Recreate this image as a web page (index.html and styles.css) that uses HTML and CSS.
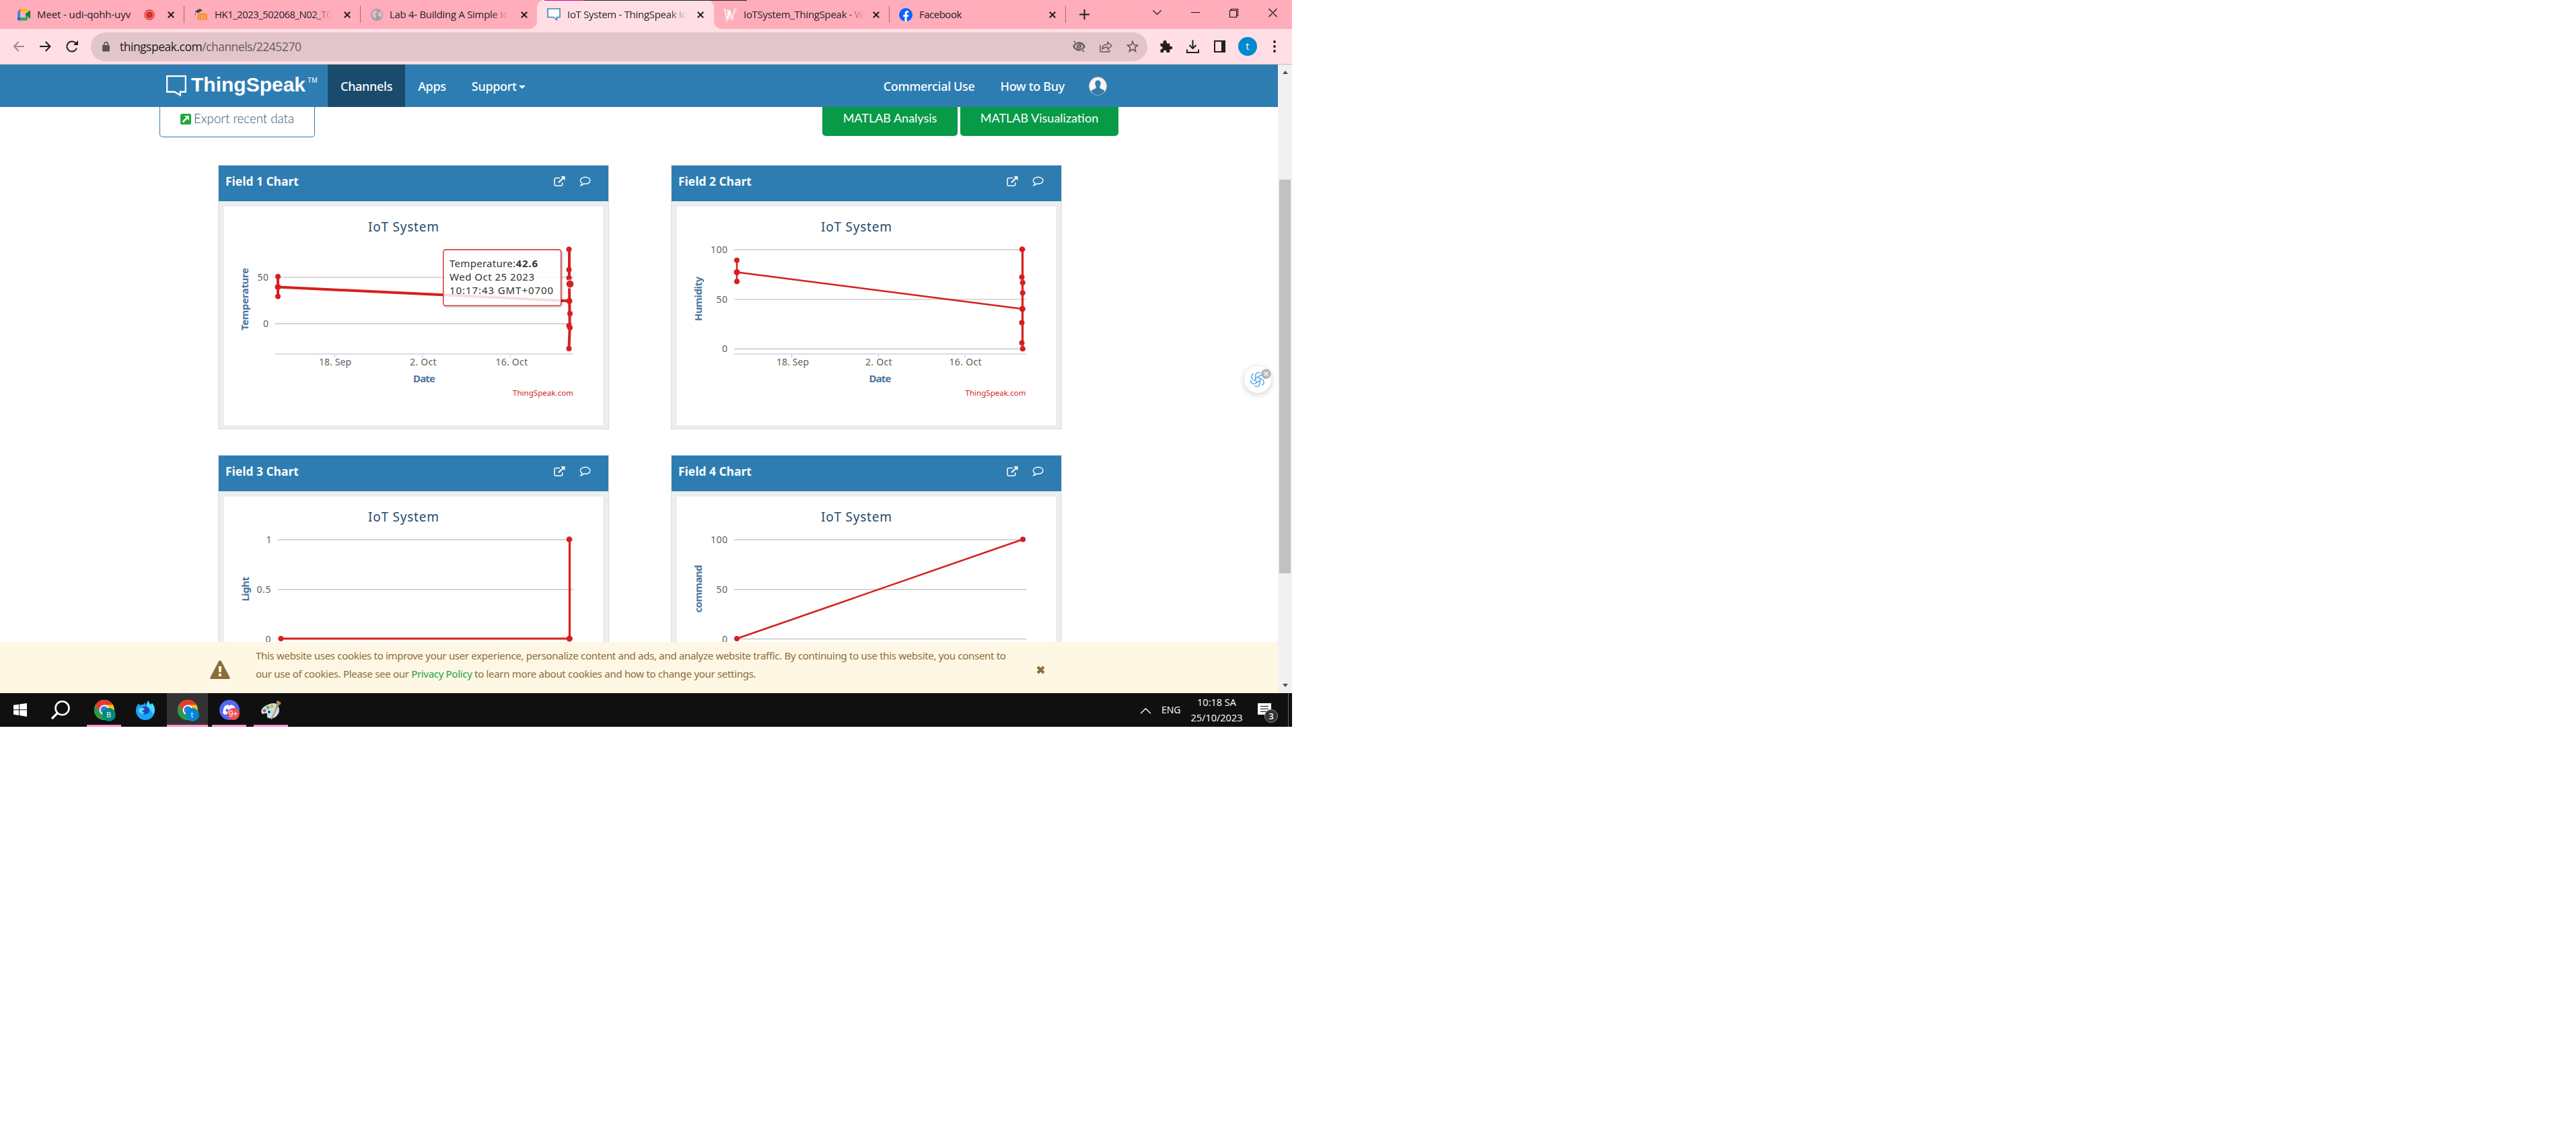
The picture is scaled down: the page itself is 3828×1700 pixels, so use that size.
FILE: index.html
```html
<!DOCTYPE html>
<html lang="en">
<head>
<meta charset="utf-8">
<title>IoT System - ThingSpeak IoT</title>
<link rel="stylesheet" href="styles.css">
</head>
<body>
<svg width="0" height="0" class="defs">
  <defs>
    <symbol id="x" viewBox="0 0 10 10"><path d="M.8.8l8.4 8.4M9.200.8L.8 9.200" fill="none" stroke="#1f1f1f" stroke-width="2"/></symbol>
    <symbol id="ext" viewBox="0 0 17 15"><path d="M9 2.500H3.200Q1 2.500 1 4.700v7Q1 14 3.200 14h7.300q2.200 0 2.200-2.300V9" fill="none" stroke="#fff" stroke-width="1.500"/><path d="M7 9.300L13.500 3" stroke="#fff" stroke-width="2.200"/><path d="M10.200 0h6.300v6.200z" fill="#fff"/></symbol>
    <symbol id="comment" viewBox="0 0 17 15"><path d="M8.700 1.300c4.200 0 7.200 2.200 7.200 5s-3 5-7.200 5c-.8 0-1.600-.1-2.300-.3Q4.800 13 2.200 13.500 3.700 12 3.800 10C2.300 9.200 1.400 7.900 1.400 6.300c0-2.800 3.100-5 7.300-5z" fill="none" stroke="#fff" stroke-width="1.400"/></symbol>
    <symbol id="chrome" viewBox="0 0 30 30"><circle cx="15" cy="15" r="15" fill="#fbc116"/><path d="M2 7.500A15 15 0 0 1 28 7.500H15L8.500 19z" fill="#e33b2e"/><path d="M2 7.500A15 15 0 0 0 15 30l6.500-11.200L15 15 8.500 18.700z" fill="#2b9a47"/><circle cx="15" cy="15" r="7.500" fill="#fff"/><circle cx="15" cy="15" r="5.700" fill="#2f7de9"/></symbol>
  </defs>
</svg>
<div class="desktop">
  <div class="tabstrip">
    <div class="tab t1">
      <svg class="fav" width="19" height="19" viewBox="0 0 19 19"><path d="M4 1h9q2 0 2 2v3.500l-3 2.500V5H5z" fill="#fbbc04"/><path d="M0 5.500L4.500 1v4.500z" fill="#ea4335"/><path d="M0 5.500h4.500V14H0z" fill="#4285f4"/><path d="M0 14h4.500v4.500H2q-2 0-2-2z" fill="#1967d2"/><path d="M4.500 14H12v-3.500l3 2.500v3.500q0 2-2 2H4.500z" fill="#34a853"/><path d="M11 9.500L19 3v13z" fill="#188038"/><path d="M4.500 5.500H11V14H4.500z" fill="#ffb0bd"/></svg>
      <span class="tt">Meet - udi-qohh-uyv</span>
      <svg class="rec" width="16" height="16" viewBox="0 0 16 16"><circle cx="8" cy="8" r="7" fill="none" stroke="#d93025" stroke-width="1.300"/><circle cx="8" cy="8" r="5.300" fill="#d93025"/></svg>
      <svg class="x" width="10" height="10"><use href="#x"/></svg>
    </div>
    <div class="tab t2">
      <svg class="fav" width="20" height="18" viewBox="0 0 20 18"><path d="M6.500 17V9.500q0-1.500 1.500-1.500t1.700 1.500V17M9.700 17V9.500Q9.800 8 12 8t2.200 1.500V17M14.200 17V9.500q.1-1.500 2-1.500t2 1.500V17" transform="translate(-.5 0)" fill="none" stroke="#f7931e" stroke-width="2.600"/><path d="M1 3.500L8 0l4 2.500L5 6.500z" fill="#444"/><path d="M1.500 4v6" stroke="#777" fill="none"/></svg>
      <span class="tt fade">HK1_2023_502068_N02_T0</span>
      <svg class="x" width="10" height="10"><use href="#x"/></svg>
    </div>
    <div class="tab t3">
      <svg class="fav" width="18" height="18" viewBox="0 0 18 18"><circle cx="9" cy="9" r="9" fill="#9aa0a6"/><path d="M2 6q3-4 6-4l2 2-2 1 1 2-3 1 2 2-1 5Q3 13 2 10zM11 6l4-2q2 3 2 6l-3 4-1-3-3-1z" fill="#e6bcc4"/></svg>
      <span class="tt fade">Lab 4- Building A Simple Io</span>
      <svg class="x" width="10" height="10"><use href="#x"/></svg>
    </div>
    <div class="tab t4 active">
      <svg class="fav" width="20" height="19" viewBox="0 0 20 19"><path d="M1 1h18v12.500h-4.500v4L9.500 13.500H1z" fill="#fff" stroke="#3b86b8" stroke-width="1.600"/></svg>
      <span class="tt fade">IoT System - ThingSpeak Io</span>
      <svg class="x" width="10" height="10"><use href="#x"/></svg>
      <span class="topline"></span>
    </div>
    <div class="tab t5">
      <svg class="fav" width="20" height="20" viewBox="0 0 20 20"><path d="M2 3l3 14M6 17l4-14M9 16l1-12M13 15l4-12M5 17l4-13M10 4l3 12M7 5l-1 5" fill="none" stroke="#fff" stroke-width="1.300"/><g fill="#ffacbb" stroke="#fff"><circle cx="2" cy="3" r="1.500"/><circle cx="7" cy="4" r="1.500"/><circle cx="5.500" cy="17.500" r="1.700"/><circle cx="13" cy="16" r="1.700"/><circle cx="17.500" cy="2.500" r="1.700"/></g></svg>
      <span class="tt fade">IoTSystem_ThingSpeak - W</span>
      <svg class="x" width="10" height="10"><use href="#x"/></svg>
    </div>
    <div class="tab t6">
      <svg class="fav" width="20" height="20" viewBox="0 0 20 20"><circle cx="10" cy="10" r="10" fill="#0866ff"/><path d="M8.500 19.900V13H6.300v-3h2.200V8.200C8.500 5.500 10 4 12.300 4q1 0 1.900.2v2.500h-1.300c-1.100 0-1.400.7-1.400 1.500V10h2.600l-.5 3h-2.100v6.900z" fill="#fff"/></svg>
      <span class="tt">Facebook</span>
      <svg class="x" width="10" height="10"><use href="#x"/></svg>
    </div>
    <svg class="plus" width="15" height="15" viewBox="0 0 15 15"><path d="M7.500 0v15M0 7.500h15" stroke="#1f1f1f" stroke-width="2"/></svg>
    <svg class="win" width="186" height="14" viewBox="0 0 186 14" fill="none" stroke="#111" stroke-width="1.100"><path d="M.5 3.500l6 6 6-6M57 6.500h13M114.500 3.500h10v10h-10zM116.500 3.500v-2h10v10h-2M172.500 1l12 12M184.500 1l-12 12"/></svg>
  </div>

  <div class="toolbar">
    <svg class="nav" width="100" height="20" viewBox="0 0 100 20" fill="none" stroke-width="2"><path d="M17 10H2M8.700 3L2 10l6.700 7" stroke="#a08b93"/><path d="M40 10h15.500M48.800 3l6.700 7-6.700 7" stroke="#1f1f1f"/><path d="M95 12.500A7.500 7.500 0 1 1 93.500 5" stroke="#1f1f1f"/><path d="M97 1v7h-7z" fill="#1f1f1f"/></svg>
    <div class="omnibox">
      <svg class="lock" width="11" height="15" viewBox="0 0 11 15"><rect y="5" width="11" height="9.500" rx="1" fill="#55565a"/><path d="M2.700 6V3.700a2.800 2.800 0 0 1 5.600 0V6" fill="none" stroke="#55565a" stroke-width="1.600"/></svg>
      <span class="url">thingspeak.com<i>/channels/2245270</i></span>
      <svg class="omni-icons" width="98" height="18" viewBox="0 0 98 18" fill="none" stroke="#60575b" stroke-width="1.600"><path d="M1.500 9Q4.500 3.500 9.500 3.500T17.500 9q-3 5.500-8 5.500T1.500 9z" stroke-width="2.400"/><circle cx="9.500" cy="9" r="3" fill="#60575b"/><path d="M2.500 2l14 14.500" stroke="#e2c5ca" stroke-width="3"/><path d="M1.500 1l15.500 16"/><path d="M41 6.500v10.500h13.500v-3M44 13q0-7 8-7V2.500l6 5.500-6 5.500V10q-5 0-8 3z" stroke-width="1.400"/><path d="M89 1.500l2.100 5.300 5.500.4-4.200 3.600 1.300 5.500L89 13.300l-4.700 3 1.300-5.500-4.200-3.600 5.500-.4z"/></svg>
    </div>
    <svg class="tools" width="100" height="20" viewBox="0 0 100 20"><path d="M1.500 5.500h4.200q-.8-4.500 2.400-4.500t2.600 4.500h4.500v4.300q4-.6 4 2.200t-4 2.300V19h-4.700q.2-3.500-2.300-3.500T5.800 19H1.500v-4.500q3-.3 3-2.500t-3-2.300z" fill="#1f1f1f"/><path d="M49.500.5v12M44.500 8l5 5 5-5M41 14.500V19h17v-4.500" fill="none" stroke="#1f1f1f" stroke-width="2"/><path d="M82 2h15v16H82z" fill="none" stroke="#1f1f1f" stroke-width="2"/><path d="M92 2h6v16h-6z" fill="#1f1f1f"/></svg>
    <span class="profile">t</span>
    <svg width="4" height="18" viewBox="0 0 4 18" fill="#1f1f1f"><circle cx="2" cy="2" r="1.900"/><circle cx="2" cy="9" r="1.900"/><circle cx="2" cy="16" r="1.900"/></svg>
  </div>

  <div class="view">
    <div class="page">
      <nav class="navbar">
        <a class="brand"><svg width="30" height="32" viewBox="0 0 30 32"><path d="M1.200 1.200h27.600v23.300h-8V29.500l-8.500-5H1.200z" fill="none" stroke="#fff" stroke-width="2.300"/></svg><b>ThingSpeak</b><small>TM</small></a>
        <a class="item on">Channels</a>
        <a class="item">Apps</a>
        <a class="item">Support<i class="caret"></i></a>
        <span class="grow"></span>
        <a class="item">Commercial Use</a>
        <a class="item">How to Buy</a>
        <svg class="avatar" width="27" height="28" viewBox="0 0 27 28"><ellipse cx="13.500" cy="14" rx="13" ry="13.500" fill="#f6f6f6" stroke="#b9b9b9"/><path d="M13.500 5.500c3 0 4.300 2.200 4 5-.2 2-1 3-1.500 4.500 0 2 .5 2.600 3 3.500 2.500.8 3.800 1.700 4.300 3.500a12 12.500 0 0 1-19.600 0c.5-1.800 1.800-2.700 4.300-3.500 2.500-.9 3-1.500 3-3.500-.5-1.500-1.300-2.500-1.500-4.500-.3-2.800 1-5 4-5z" fill="#2e7db2" stroke="#888" stroke-width=".5"/></svg>
      </nav>
      <div class="buttons">
        <a class="btn outline"><svg width="16" height="16" viewBox="0 0 16 16"><rect width="16" height="16" rx="2.500" fill="#21a93c"/><path d="M3.500 12.500L10 6" stroke="#fff" stroke-width="2.500"/><path d="M6 3h7v7z" fill="#fff"/></svg>Export recent data</a>
        <span class="grow"></span>
        <a class="btn green a">MATLAB Analysis</a>
        <a class="btn green b">MATLAB Visualization</a>
      </div>
      <div class="panels">
        <section class="panel">
          <header><h4>Field 1 Chart</h4><svg width="17" height="15"><use href="#ext"/></svg><svg width="17" height="15"><use href="#comment"/></svg></header>
          <div class="plot">
            <svg width="563" height="325" viewBox="333 307 563 325">
              <text class="title" x="547" y="344" textLength="105">IoT System</text>
              <path class="grid" d="M409 412.200h443M409 481h443"/>
              <path class="axis" d="M409 526h443M497.500 526v6M627.500 526v6M758.500 526v6"/>
              <text class="lab" x="382.500" y="416.500" textLength="16.500">50</text><text class="lab" x="391" y="485.500">0</text>
              <text class="lab" x="474" y="543" textLength="48">18. Sep</text><text class="lab" x="609" y="543" textLength="39.500">2. Oct</text><text class="lab" x="736.500" y="543" textLength="47.500">16. Oct</text>
              <text class="name" x="614" y="568" textLength="33">Date</text>
              <text class="name" transform="translate(369.300 491) rotate(-90)" textLength="93">Temperature</text>
              <text class="credit" x="762" y="588" textLength="90">ThingSpeak.com</text>
              <path class="line thick" d="M413 411v29M413 426.500L846 447.300M846 370v52L846.700 487 845.500 518"/>
              <g class="dots"><circle cx="413" cy="411" r="4"/><circle cx="413" cy="426.500" r="4.500"/><circle cx="413" cy="440.500" r="4"/><circle cx="845.500" cy="370.500" r="4"/><circle cx="845.500" cy="400.700" r="4"/><circle cx="845.500" cy="413" r="4"/><circle cx="846" cy="447.300" r="4.500"/><circle cx="847" cy="466" r="4"/><circle cx="845.500" cy="484" r="4"/><circle cx="847" cy="487" r="4"/><circle cx="845.500" cy="518" r="4"/></g>
              <circle cx="847" cy="422" r="6" fill="#d62020" stroke="#fff" stroke-width="1.200"/>
              <rect class="tipshadow" x="660" y="372.500" width="175" height="83" rx="3.500"/>
              <rect class="tip" x="658.700" y="371" width="175" height="83.200" rx="3.500"/>
              <text class="tiptext" x="668" y="397" textLength="98">Temperature:</text><text class="tiptext bold" x="766.500" y="397" textLength="32.500">42.6</text>
              <text class="tiptext" x="668" y="417" textLength="126">Wed Oct 25 2023</text>
              <text class="tiptext" x="668" y="437" textLength="154">10:17:43 GMT+0700</text>
            </svg>
          </div>
        </section>
        <section class="panel">
          <header><h4>Field 2 Chart</h4><svg width="17" height="15"><use href="#ext"/></svg><svg width="17" height="15"><use href="#comment"/></svg></header>
          <div class="plot">
            <svg width="563" height="325" viewBox="1006 307 563 325">
              <text class="title" x="1220" y="344" textLength="105">IoT System</text>
              <path class="grid" d="M1091 371h434M1091 444.800h434M1091 518.500h434"/>
              <path class="axis" d="M1091 526h434M1176.500 526v6M1305.500 526v6M1434 526v6"/>
              <text class="lab" x="1056" y="375.500" textLength="25">100</text><text class="lab" x="1064.500" y="449.500" textLength="16.500">50</text><text class="lab" x="1073" y="523">0</text>
              <text class="lab" x="1154" y="543" textLength="48">18. Sep</text><text class="lab" x="1286" y="543" textLength="39.500">2. Oct</text><text class="lab" x="1410.500" y="543" textLength="48">16. Oct</text>
              <text class="name" x="1291.500" y="568" textLength="33">Date</text>
              <text class="name" transform="translate(1042.500 477) rotate(-90)" textLength="66">Humidity</text>
              <text class="credit" x="1434.500" y="588" textLength="90">ThingSpeak.com</text>
              <path class="line" d="M1095 387v31M1095 404.500L1519 459"/><path class="line mid" d="M1519.500 370.500V518"/>
              <g class="dots"><circle cx="1095" cy="386.700" r="4"/><circle cx="1095" cy="404.500" r="4.500"/><circle cx="1095" cy="418.300" r="4"/><circle cx="1519" cy="370.500" r="4.300"/><circle cx="1518.500" cy="411.700" r="4"/><circle cx="1519.700" cy="420" r="4"/><circle cx="1519.700" cy="435.300" r="4"/><circle cx="1519.300" cy="459" r="4.500"/><circle cx="1518.500" cy="479.500" r="4"/><circle cx="1518.500" cy="509.500" r="4"/><circle cx="1519.700" cy="518.300" r="4"/></g>
            </svg>
          </div>
        </section>
        <section class="panel">
          <header><h4>Field 3 Chart</h4><svg width="17" height="15"><use href="#ext"/></svg><svg width="17" height="15"><use href="#comment"/></svg></header>
          <div class="plot">
            <svg width="563" height="325" viewBox="333 738 563 325">
              <text class="title" x="547" y="775" textLength="105">IoT System</text>
              <path class="grid" d="M413 802h439M413 876h439M413 949.300h439"/>
              <text class="lab" x="395.500" y="806.500">1</text><text class="lab" x="381.500" y="880.500" textLength="21">0.5</text><text class="lab" x="394.500" y="954.500">0</text>
              <text class="name" transform="translate(369.500 893.500) rotate(-90)" textLength="36.500">Light</text>
              <path class="line mid" d="M417.500 949H846.500V801.500"/>
              <g class="dots"><circle cx="417.500" cy="949" r="4"/><circle cx="846" cy="801.500" r="4.300"/><circle cx="846.300" cy="949" r="4.500"/></g>
            </svg>
          </div>
        </section>
        <section class="panel">
          <header><h4>Field 4 Chart</h4><svg width="17" height="15"><use href="#ext"/></svg><svg width="17" height="15"><use href="#comment"/></svg></header>
          <div class="plot">
            <svg width="563" height="325" viewBox="1006 738 563 325">
              <text class="title" x="1220" y="775" textLength="105">IoT System</text>
              <path class="grid" d="M1091 802h434M1091 876h434M1091 949.500h434"/>
              <text class="lab" x="1056" y="806.500" textLength="25">100</text><text class="lab" x="1064.500" y="880.500" textLength="16.500">50</text><text class="lab" x="1073" y="954.500">0</text>
              <text class="name" transform="translate(1042.500 910.500) rotate(-90)" textLength="71">command</text>
              <path class="line" d="M1095 949L1520 801.500"/>
              <g class="dots"><circle cx="1095" cy="949" r="4"/><circle cx="1520" cy="801.500" r="4"/></g>
            </svg>
          </div>
        </section>
      </div>
      <div class="cookie">
        <svg class="warn" width="30" height="28" viewBox="0 0 30 28"><path d="M15 .5q1.300 0 2 1.300L29.500 25.500Q30 28 28 28H2Q0 28 .5 25.500L13 1.800Q13.700.5 15 .5z" fill="#8a6d3b"/><path d="M12.700 9h4.600l-.6 9h-3.400zM13 20h4v4h-4z" fill="#fdf7e3"/></svg>
        <p>This website uses cookies to improve your user experience, personalize content and ads, and analyze website traffic. By continuing to use this website, you consent to<br>our use of cookies. Please see our <a>Privacy Policy</a> to learn more about cookies and how to change your settings.</p>
        <svg class="close" width="13" height="13" viewBox="0 0 13 13"><path d="M2 2l9 9M11 2l-9 9" stroke="#8a6d3b" stroke-width="4"/></svg>
      </div>
      <div class="gpt">
        <svg width="24" height="24" viewBox="-12 -12 24 24" fill="none" stroke="#4da9ee" stroke-width="1.400"><path id="k" d="M-3.300 1.900V-6.200A4.500 4.500 0 0 1 4.300-9.300"/><use href="#k" transform="rotate(60)"/><use href="#k" transform="rotate(120)"/><use href="#k" transform="rotate(180)"/><use href="#k" transform="rotate(240)"/><use href="#k" transform="rotate(300)"/></svg>
        <svg class="gx" width="15" height="15" viewBox="0 0 15 15"><circle cx="7.500" cy="7.500" r="7.300" fill="#aaa" fill-opacity=".85"/><path d="M4.500 4.500l6 6M10.500 4.500l-6 6" stroke="#fff" stroke-width="1.300"/></svg>
      </div>
    </div>
    <div class="scroll"><i class="up"></i><i class="thumb"></i><i class="down"></i></div>
  </div>

  <div class="taskbar">
    <div class="app w1"><svg width="20" height="20" viewBox="0 0 20 20" fill="#fff"><path d="M0 2.800L8 1.700v7.500H0zM9 1.500L20 0v9.200H9zM0 10.300h8v7.600l-8-1.100zM9 10.300h11V20L9 18.100z"/></svg></div>
    <div class="app w2"><svg width="28" height="28" viewBox="0 0 28 28" fill="none" stroke="#fff" stroke-width="2.600"><circle cx="16.500" cy="11.300" r="10"/><path d="M9.500 18.500L1 27" stroke-width="3.200"/></svg></div>
    <div class="app run w3"><svg width="30" height="30"><use href="#chrome"/></svg><span class="badge teal">B</span></div>
    <div class="app w4"><svg width="28" height="29" viewBox="0 0 28 29"><path d="M2 7q1-2 2-3 0 2 1.500 3Q8 5.500 11 6q1-2 3-3-1 2 1 4Q16 2 19 0q0 4 3 6l2-2q4 4 4 11a14 14 0 0 1-28 0Q0 10 2 7z" fill="#18a5f5"/><path d="M19 0q0 4 3 6l2-2q4 4 4 11l-2 5q-3-2-4-6-2-3-6-4 0-7 3-10z" fill="#46dcff"/><circle cx="14" cy="14.500" r="6" fill="#2048b8"/><path d="M4 13q3-3 6-2 2 0 3 2-2 2-4 2 1 3 4 3-3 3-7 0Q4 16 4 13z" fill="#5fd9ff"/></svg></div>
    <div class="app run w5"><svg width="30" height="30"><use href="#chrome"/></svg><span class="badge blue">t</span></div>
    <div class="app run w6"><svg width="30" height="30" viewBox="0 0 30 30"><circle cx="15" cy="15" r="15" fill="#5865f2"/><path d="M8 9q3-1.700 5-1.700l.5 1h3l.5-1q2 0 5 1.700 3 5 3 11-2.500 2-5 2.300l-1.200-2h-7.600l-1.200 2Q7.500 22 5 20q0-6 3-11z" fill="#fff"/><ellipse cx="11.500" cy="15.500" rx="2" ry="2.300" fill="#5865f2"/><ellipse cx="18.500" cy="15.500" rx="2" ry="2.300" fill="#5865f2"/></svg><span class="badge red">9+</span></div>
    <div class="app run w7"><svg width="30" height="29" viewBox="0 0 30 29"><path d="M13 5Q23 2 26 9q3 8-3 14-5 5-12 3-3-1-2-4t-2-3-4 1-3-3Q0 9 13 5z" fill="#bfe0f2"/><circle cx="5" cy="15" r="2.300" fill="#e0483e"/><circle cx="10" cy="10.500" r="2.400" fill="#4cb848"/><circle cx="16" cy="8.500" r="2.500" fill="#f6a821"/><circle cx="12" cy="17" r="1.700" fill="#1a1a1a"/><path d="M22.500 9.500h2.500L16 28q-1.500 1-1.300-1z" fill="#e08733"/><path d="M21.500 10l2-4-1-4 2-2 5 3-1 3-2.500 1-1.500 4z" fill="#b88a5a"/></svg></div>
    <span class="grow"></span>
    <svg class="chev" width="17" height="9" viewBox="0 0 17 9"><path d="M1 8.200L8.500 1 16 8.200" fill="none" stroke="#fff" stroke-width="1.300"/></svg>
    <span class="eng">ENG</span>
    <div class="clock"><span>10:18 SA</span><span>25/10/2023</span></div>
    <div class="note"><svg width="21" height="22" viewBox="0 0 21 22"><path d="M0 0h20v17h-6v4l-4-4H0z" fill="#fff"/><path d="M4 4.500h12M4 8.500h12M4 12.500h12" stroke="#111" stroke-width="1.200"/></svg><span>3</span></div>
    <i class="peek"></i>
  </div>
</div>
</body>
</html>
```
FILE: styles.css
```css
* { box-sizing: border-box; }
body { margin: 0; background: #fff; font-family: "Open Sans", "Liberation Sans", sans-serif; }
.defs { position: absolute; }
svg { display: block; flex: none; }
i { font-style: normal; }
.grow { flex: 1; }
.desktop { width: 1920px; height: 1080px; display: flex; flex-direction: column; overflow: hidden; }

.tabstrip { height: 43px; background: #ffacbb; display: flex; align-items: flex-start; }
.tab { height: 43px; display: flex; align-items: center; position: relative; flex: none; }
.tab::after { content: ""; position: absolute; right: 0; top: 9px; width: 1px; height: 25px; background: #9a6d77; }
.tab.active::after, .tab.t3::after { display: none; }
.tab .fav { margin-right: 10px; }
.tt { font-size: 15px; color: #222; white-space: nowrap; line-height: 20px; margin-top: -2px; letter-spacing: -.1px; }
.tab .x { margin-left: auto; }
.fade { letter-spacing: -.3px; -webkit-mask-image: linear-gradient(90deg, #000 85%, transparent 100%); mask-image: linear-gradient(90deg, #000 85%, transparent 100%); }
.t1 { width: 274px; padding: 0 15px 0 26px; }
.rec { margin-left: 20px; }
.t2 { width: 262px; padding: 0 15px; }
.t2 .tt { letter-spacing: -.55px; }
.t3 { width: 262px; padding: 0 14px 0 15px; }
.t4 { width: 263px; padding: 0 15px; }
.t5 { width: 261px; padding: 0 15px 0 14px; }
.t6 { width: 262px; padding: 0 15px 0 14px; }
.t6 .tt { letter-spacing: -.5px; }
.active { background: #ffdfe5; border-radius: 11px 11px 0 0; z-index: 1; }
.active::before { content: ""; position: absolute; left: -11px; right: -11px; bottom: 0; height: 11px; background: radial-gradient(circle at 0 0, transparent 10.500px, #ffdfe5 11px) left / 11px 11px no-repeat, radial-gradient(circle at 100% 0, transparent 10.500px, #ffdfe5 11px) right / 11px 11px no-repeat; }
.topline { position: absolute; left: 11px; top: 0; width: 301px; height: 1px; background: linear-gradient(90deg, #e6008c 60px, #222 60px); }
.plus { margin: 14px 94px 0 20px; }
.win { margin-top: 12px; }

.toolbar { height: 53px; background: #ffdfe5; border-bottom: 1px solid #d3b4bb; display: flex; align-items: center; padding: 0 20px 0 19px; }
.nav { margin-right: 16px; }
.omnibox { width: 1570px; height: 43px; border-radius: 22px; background: #e2c5ca; display: flex; align-items: center; padding: 0 13px 0 17px; margin-right: 18px; }
.url { margin-left: 15px; font-size: 17.500px; letter-spacing: -.5px; color: #201c1e; line-height: 24px; flex: 1; white-space: nowrap; }
.url i { color: #6a5c61; }
.tools { margin-right: 17px; }
.profile { width: 28px; height: 28px; border-radius: 50%; background: #0288d1; color: #fff; font-size: 15px; line-height: 26px; text-align: center; margin-right: 24px; }

.view { height: 934px; display: flex; }
.page { width: 1899px; height: 934px; position: relative; display: flex; flex-direction: column; overflow: hidden; }
.navbar { height: 63px; flex: none; background: #2e7db2; display: flex; align-items: center; color: #fff; padding: 0 254px 0 247px; }
.brand { display: flex; align-items: center; width: 240px; }
.brand b { font: bold 30px/36px "Liberation Sans", Arial, sans-serif; margin: -4px 3px 0 7px; }
.brand small { font: 10px/12px "Liberation Sans", Arial, sans-serif; margin-bottom: 15px; }
.item { height: 63px; padding: 0 19px; font: 500 18px/64px "Noto Sans", sans-serif; letter-spacing: -.3px; display: flex; align-items: center; }
.on { background: #1b4b6c; }
.caret { border: 5px solid transparent; border-top-color: #fff; border-bottom: 0; margin: 4px 0 0 3px; }
.avatar { margin-left: 17px; }
.buttons { flex: none; height: 86px; display: flex; padding: 0 237px; align-items: flex-start; }
.btn { display: flex; align-items: flex-start; font: 18px/24px Lato, sans-serif; border-radius: 0 0 5px 5px; justify-content: center; }
.outline { width: 231px; height: 45px; border: 1px solid #2e7db2; border-top: 0; color: #35546e; padding-top: 5px; font-size: 18.700px; font-weight: 300; }
.outline svg { margin: 5px 4px 0 0; }
.green { background: #079a47; color: #fff; height: 43px; padding-top: 4px; }
.a { width: 201px; margin-right: 4px; }
.b { width: 235px; }
.panels { display: grid; grid-template-columns: 581px 581px; column-gap: 92px; row-gap: 38px; padding-left: 324px; }
.panel { height: 393px; border: 1px solid #ddd; background: #ededed; display: flex; flex-direction: column; }
.panel header { height: 53px; flex: none; background: #2e7db2; display: flex; align-items: flex-start; padding: 11px 26px 0 10px; }
.panel header svg { margin: 5px 0 0 21px; }
h4 { flex: 1; margin: 0; color: #fff; font: bold 17.400px/24px "Open Sans", sans-serif; white-space: nowrap; }
.plot { margin: 8px; height: 325px; background: #fff; }

text { font-family: "Noto Sans", sans-serif; }
.title { font-size: 19px; fill: #274b6d; }
.grid { stroke: #c6c6c6; stroke-width: 1.300; fill: none; }
.axis { stroke: #c6d5e6; stroke-width: 1.300; fill: none; }
.lab { font-size: 14px; fill: #606060; }
.name { font-size: 15px; font-weight: bold; fill: #4d759e; }
.credit { font-size: 11.500px; fill: #d62020; }
.line { fill: none; stroke: #d62020; stroke-width: 2.500; }
.mid { stroke-width: 3.200; }
.thick { stroke-width: 4; }
.dots { fill: #d62020; }
.tip { fill: #fff; fill-opacity: .85; stroke: #d62020; stroke-width: 1.300; }
.tipshadow { fill: none; stroke: #000; stroke-opacity: .17; stroke-width: 3; }
.tiptext { font-size: 15px; fill: #333; }
.bold { font-weight: bold; }

.cookie { position: absolute; left: 0; bottom: 0; width: 1899px; height: 76px; background: #fdf7e3; display: flex; align-items: flex-start; padding-left: 312px; }
.warn { margin-top: 27px; }
.cookie p { width: 1160px; margin: 7px 0 0 38px; font: 15px/27px "Noto Sans", sans-serif; letter-spacing: -.31px; color: #8a6d3b; white-space: nowrap; }
.cookie a { color: #21a44a; }
.close { margin-left: 30px; margin-top: 35px; }
.warn + p { width: 1130px; }
.gpt { position: absolute; left: 1849px; top: 448px; width: 40px; height: 40px; border-radius: 50%; background: #fff; box-shadow: 0 2px 10px rgba(0,0,0,.2); padding: 8px; }
.gx { position: absolute; right: 0; top: 4px; }
.scroll { width: 21px; background: #f1f1f1; display: flex; flex-direction: column; align-items: center; }
.up { border: 4.500px solid transparent; border-bottom: 5px solid #505050; border-top: 0; margin-top: 9px; }
.thumb { width: 17px; height: 585px; background: #c1c1c1; margin-top: 157px; }
.down { border: 4.500px solid transparent; border-top: 5px solid #505050; border-bottom: 0; margin-top: 164px; }

.taskbar { height: 50px; flex: none; background: #101010; display: flex; color: #fff; font-size: 15px; }
.app { height: 50px; position: relative; flex: none; display: flex; align-items: center; justify-content: center; }
.run { border-bottom: 3px solid #ff8fd2; padding-top: 3px; }
.w1 { width: 60px; }
.w2 { width: 60px; }
.w3 { width: 51px; margin: 0 10px 0 9px; }
.w4 { width: 52px; }
.w5 { width: 61px; background: #333; margin: 0 6px; }
.w6 { width: 51px; }
.w7 { width: 51px; margin-left: 11px; }
.badge { position: absolute; left: 50%; top: 22px; margin-left: -3px; width: 20px; height: 20px; border-radius: 50%; font-size: 11px; line-height: 20px; text-align: center; }
.teal { background: #00897b; }
.blue { background: #0288d1; }
.red { background: #f04f54; font-size: 12px; width: 18px; height: 18px; line-height: 17px; }
.chev { margin: 22px 15px 0 0; }
.eng { width: 44px; line-height: 50px; font-size: 14px; }
.clock { width: 76px; display: flex; flex-direction: column; align-items: center; font-size: 14.500px; line-height: 23px; padding-top: 2px; white-space: nowrap; }
.note { width: 31px; margin: 15px 14px 0 23px; position: relative; }
.note span { position: absolute; left: 10px; top: 9px; width: 20px; height: 20px; border: 1px solid #888; border-radius: 50%; background: #333; font-size: 13px; font-weight: 600; line-height: 18px; text-align: center; }
.peek { width: 6px; border-left: 1px solid #666; }
```
